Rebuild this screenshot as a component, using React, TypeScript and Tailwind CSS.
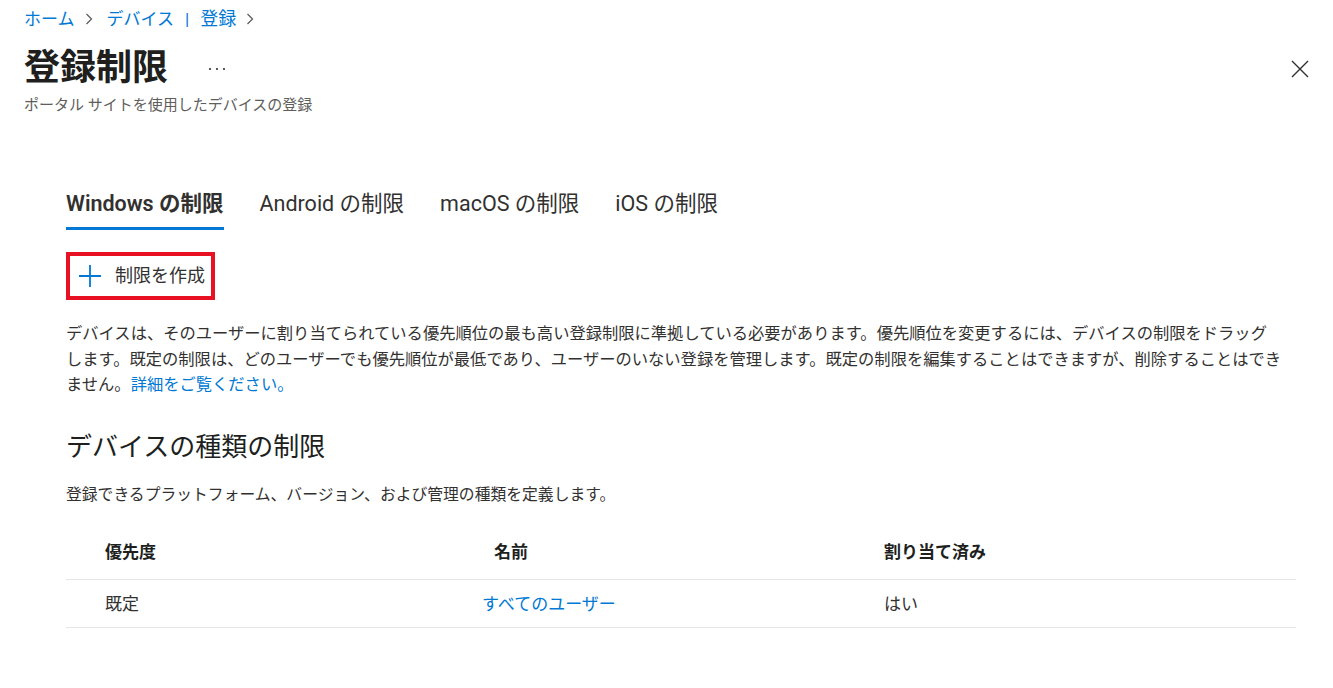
import React from "react";

const Chevron = () => (
  <svg width="10" height="14" viewBox="0 0 10 14" className="mx-[9px]">
    <path d="M2.5 2 L7.5 7 L2.5 12" fill="none" stroke="#605e5c" strokeWidth="1.3" />
  </svg>
);

export default function App() {
  return (
    <div className="w-[1333px] h-[688px] bg-white text-[#323130] font-['Roboto','Noto_Sans_CJK_JP',sans-serif] overflow-hidden">
      {/* header */}
      <div className="pl-[24px] pr-[24px]">
        <div className="pt-[9px] h-[29px] flex items-center text-[17px] leading-5 text-[#0078d4]">
          <span>ホーム</span>
          <Chevron />
          <span className="ml-[4px]">デバイス</span>
          <span className="mx-[11px]">|</span>
          <span className="text-[18px]">登録</span>
          <Chevron />
        </div>
        <div className="flex items-center justify-between mt-[17px]">
          <div className="flex items-center">
            <h1 className="text-[36px] leading-[44px] font-semibold text-[#201f1e]">登録制限</h1>
            <svg width="18" height="6" viewBox="0 0 18 6" className="ml-[40px] mt-[2px]">
              <circle cx="2" cy="3" r="1.1" fill="#323130" />
              <circle cx="9" cy="3" r="1.1" fill="#323130" />
              <circle cx="16" cy="3" r="1.1" fill="#323130" />
            </svg>
          </div>
          <svg width="18" height="18" viewBox="0 0 18 18" className="mt-[2px]">
            <path d="M1 1 L17 17 M17 1 L1 17" stroke="#323130" strokeWidth="1.4" />
          </svg>
        </div>
        <div className="mt-[5px] text-[15px] leading-5 text-[#605e5c]">ポータル サイトを使用したデバイスの登録</div>
      </div>

      {/* content */}
      <div className="pl-[66px] pr-[37px]">
        {/* tabs */}
        <div className="mt-[74px] flex gap-[36px] text-[21.5px] leading-[30px]">
          <div className="pb-[8px] border-b-[3px] border-[#0078d4] font-semibold">Windows の制限</div>
          <div className="pb-[8px] border-b-[3px] border-transparent">Android の制限</div>
          <div className="pb-[8px] border-b-[3px] border-transparent">macOS の制限</div>
          <div className="pb-[8px] border-b-[3px] border-transparent">iOS の制限</div>
        </div>

        {/* create button */}
        <div className="mt-[22px] inline-flex items-center h-[48px] border-[4px] border-[#e81123] pl-[8px] pr-[6px]">
          <svg width="24" height="24" viewBox="0 0 24 24">
            <path d="M12 1 V23 M1 12 H23" stroke="#0078d4" strokeWidth="1.8" />
          </svg>
          <span className="ml-[13px] text-[18px] leading-6 text-[#323130]">制限を作成</span>
        </div>

        {/* paragraph */}
        <p className="mt-[21px] text-[16.3px] leading-[25.5px] text-[#323130]">
          デバイスは、そのユーザーに割り当てられている優先順位の最も高い登録制限に準拠している必要があります。優先順位を変更するには、デバイスの制限をドラッグ
          <br />
          します。既定の制限は、どのユーザーでも優先順位が最低であり、ユーザーのいない登録を管理します。既定の制限を編集することはできますが、削除することはでき
          <br />
          ません。<span className="text-[#0078d4]">詳細をご覧ください。</span>
        </p>

        <h2 className="mt-[32px] text-[26px] leading-[34px] text-[#201f1e]">デバイスの種類の制限</h2>
        <div className="mt-[20px] text-[15.8px] leading-[22px] text-[#323130]">
          登録できるプラットフォーム、バージョン、および管理の種類を定義します。
        </div>

        {/* table */}
        <div className="mt-[34px] text-[17px] leading-6">
          <div className="grid grid-cols-[378px_401px_1fr] border-b border-[#e5e5e5] pt-0 pb-[15px] font-semibold text-[#201f1e]">
            <div className="pl-[39px]">優先度</div>
            <div className="pl-[50px]">名前</div>
            <div className="pl-[39px]">割り当て済み</div>
          </div>
          <div className="grid grid-cols-[378px_401px_1fr] border-b border-[#e5e5e5] pt-[12px] pb-[11px]">
            <div className="pl-[39px]">既定</div>
            <div className="pl-[38px] text-[#0078d4]">すべてのユーザー</div>
            <div className="pl-[39px]">はい</div>
          </div>
        </div>
      </div>
    </div>
  );
}
